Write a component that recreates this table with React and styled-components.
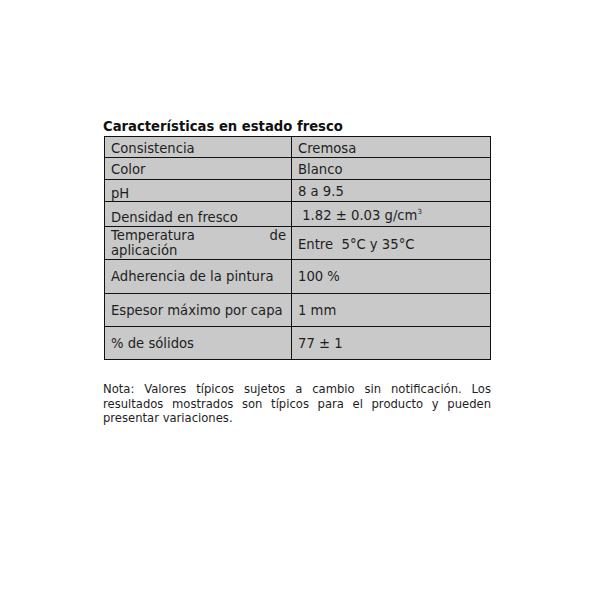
import React from "react";
import styled, { createGlobalStyle } from "styled-components";

const Global = createGlobalStyle`
  html, body { margin: 0; padding: 0; background: #ffffff; }
  body { font-family: "DejaVu Sans", Verdana, sans-serif; }
`;

const Page = styled.div`
  width: 602px;
  height: 606px;
  box-sizing: border-box;
  padding: 119px 0 0 103px;
  color: #1e1e1e;
`;

const Title = styled.h2`
  margin: 0 0 1px 0;
  font-size: 13.2px;
  line-height: 16px;
  font-weight: bold;
  color: #111;
`;

const Table = styled.div`
  display: grid;
  grid-template-columns: 186px 198px;
  grid-template-rows: 20px 21px 21px 24px 32px 33px 32px 32px;
  gap: 1px;
  padding: 1px;
  background: #111;
  width: max-content;
  margin-left: 1px;
`;

const Cell = styled.div`
  background: #c9c9c9;
  display: flex;
  align-items: ${(p) => p.$v || "center"};
  padding: ${(p) => p.$pt || 0}px 5px ${(p) => p.$pb || 0}px 6px;
  font-size: 13.2px;
  line-height: 15px;
  white-space: pre;
  overflow: hidden;
`;

const Text = styled.span`
  display: block;
  width: 100%;
`;

const JLine = styled.span`
  display: block;
  line-height: 14.5px;
  text-align: ${(p) => (p.$justify ? "justify" : "left")};
  text-align-last: ${(p) => (p.$justify ? "justify" : "left")};
  white-space: normal;
`;

const Sup = styled.sup`
  font-size: 7px;
  line-height: 0;
  vertical-align: 6px;
`;

const Note = styled.div`
  margin-top: 22px;
  width: 388px;
  font-size: 11.6px;
  line-height: 14.5px;
  color: #1e1e1e;
`;

const NoteLine = styled.div`
  text-align: ${(p) => (p.$justify ? "justify" : "left")};
  text-align-last: ${(p) => (p.$justify ? "justify" : "left")};
  white-space: nowrap;
`;

export default function App() {
  return (
    <>
      <Global />
      <Page>
        <Title>Características en estado fresco</Title>
        <Table>
          <Cell $v="flex-end" $pb={1}><Text>Consistencia</Text></Cell>
          <Cell $v="flex-end" $pb={1}><Text>Cremosa</Text></Cell>

          <Cell $v="flex-end" $pb={2}><Text>Color</Text></Cell>
          <Cell $v="flex-end" $pb={2}><Text>Blanco</Text></Cell>

          <Cell $v="flex-end" $pb={0}><Text>pH</Text></Cell>
          <Cell $v="flex-start" $pt={4}><Text>8 a 9.5</Text></Cell>

          <Cell $v="flex-end" $pb={1}><Text>Densidad en fresco</Text></Cell>
          <Cell $v="flex-start" $pt={6}><Text> 1.82 ± 0.03 g/cm<Sup>3</Sup></Text></Cell>

          <Cell $v="flex-start" $pt={2}>
            <Text>
              <JLine $justify>Temperatura de</JLine>
              <JLine>aplicación</JLine>
            </Text>
          </Cell>
          <Cell $v="center" $pt={2}><Text>Entre  5°C y 35°C</Text></Cell>

          <Cell><Text>Adherencia de la pintura</Text></Cell>
          <Cell><Text>100 %</Text></Cell>

          <Cell><Text>Espesor máximo por capa</Text></Cell>
          <Cell><Text>1 mm</Text></Cell>

          <Cell><Text>% de sólidos</Text></Cell>
          <Cell><Text>77 ± 1</Text></Cell>
        </Table>
        <Note>
          <NoteLine $justify>Nota: Valores típicos  sujetos a cambio sin notificación. Los</NoteLine>
          <NoteLine $justify>resultados mostrados son típicos para el producto y pueden</NoteLine>
          <NoteLine>presentar variaciones.</NoteLine>
        </Note>
      </Page>
    </>
  );
}
